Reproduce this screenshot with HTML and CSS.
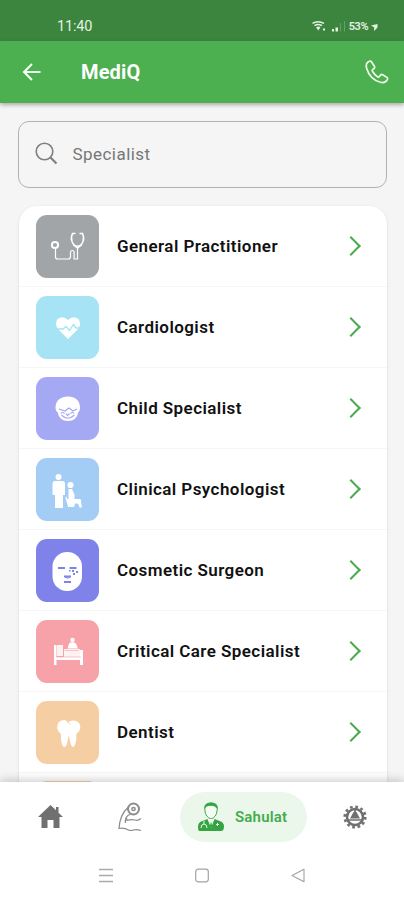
FILE: index.html
```
<!DOCTYPE html>
<html lang="en">
<head>
<meta charset="utf-8">
<meta name="viewport" content="width=device-width, initial-scale=1">
<title>MediQ</title>
<link rel="stylesheet" href="styles.css">
</head>
<body>
<div class="app">
  <div class="status">
    <span class="time">11:40</span>
    <svg class="wifi" width="14" height="12" viewBox="0 0 14 12"><path d="M.5 3.400Q6 0 12 3.400M2.500 5.600q3.500-2.400 7.500 0" fill="none" stroke="currentColor" stroke-width="1.500"/><path d="M4 7.200Q6.500 5.700 8.500 7.200L6.300 10.500ZM11 8.500h2v2h-2z" fill="currentColor"/></svg>
    <svg class="signal" width="16" height="13" viewBox="0 0 16 13"><path d="M1 9h2v2.500H1zM4.500 7.500H7v4H4.500z" fill="currentColor"/><path d="M9 3h1v8.500H9zM13 1h1v10.500h-1z" fill="currentColor" opacity=".25"/></svg>
    <span class="percent">53%</span>
    <svg class="bolt" width="7" height="9" viewBox="0 0 7 9"><path d="M0 3.500 6.500 2v3.500L3 9 3.200 5.500Z" fill="currentColor"/></svg>
  </div>
  <header class="bar">
    <svg class="back" width="20" height="20" viewBox="0 0 20 20"><path d="M18.500 10H2M10 2 2 10l8 8" fill="none" stroke="currentColor" stroke-width="2.100"/></svg>
    <h1>MediQ</h1>
    <svg class="phone" width="26" height="26" viewBox="0 0 26 26"><path d="M5.300 2.300C2.500 3.500 1.700 6 2.600 9.200 4.600 16 10 21.500 16.500 23.300c3.200.8 5.600-.1 7-2.900.4-.9.200-1.500-.6-2l-4.300-2.700c-.8-.5-1.500-.3-2.100.4l-1.300 1.600c-.4.500-.9.500-1.400.2-2.400-1.500-4.200-3.500-5.500-5.900-.3-.5-.2-1 .3-1.300l1.500-1.200c.7-.6.8-1.300.4-2L7.600 3c-.6-.9-1.300-1.200-2.300-.7Z" fill="none" stroke="currentColor" stroke-width="1.700" stroke-linejoin="round"/></svg>
  </header>
  <main class="content">
    <div class="search">
      <svg width="24" height="24" viewBox="0 0 24 24" fill="none" stroke="currentColor"><circle cx="9.500" cy="9.500" r="8.300" stroke-width="1.600"/><path d="m15.500 15.500 6 6" stroke-width="2.200"/></svg>
      <span>Specialist</span>
    </div>
    <ul class="list">
      <li><span class="tile gray"><svg width="63" height="63" viewBox="0 0 63 63" fill="none" stroke="#fff"><circle cx="19" cy="30" r="3.100" stroke-width="2"/><path d="M19.500 33.500v8.500q0 2 2 2H32q2.500 0 2.500-2.500v-4q0-2 1.800-2t1.800 2V44H41.500V32" stroke-width="1.200"/><path d="M39.500 18.500h-3q-2 4 -.5 8 2 4.800 5.500 4.800t5.500-4.800q1.500-4-.5-8h-3" stroke-width="1.500"/><path d="m37 29.500 4.500 3.500 4.500-3.500" stroke-width="1.500"/></svg></span><b>General Practitioner</b><i class="chev"></i></li>
      <li><span class="tile cyan"><svg width="63" height="63" viewBox="0 0 63 63"><path d="M32 43 21.500 32.500q-3-5 0-9.500 5.500-4 10.500 1 5-5 10.500-1 3 4.500 0 9.500Z" fill="#fff"/><path d="M20 33h7l3-2.500 3.500 4 4-6 2.500 3.500h4" fill="none" stroke="#a6e3f4" stroke-width="1.300"/></svg></span><b>Cardiologist</b><i class="chev"></i></li>
      <li><span class="tile lilac"><svg width="63" height="63" viewBox="0 0 63 63"><path d="M19.500 31C19.500 23.500 24.500 19.500 32 19.500S44 23.500 44 31q0 3-1.700 4-1.500 9-10.300 9t-10.500-9q-2-1-2-4Z" fill="#fff"/><path d="m23 32 6 2 4-3 4 3 4-2M25 36.500q1.500-2 3.500 0m6 0q2-2 3.500 0M25.500 38q6 6.500 13 0M30 36.500l1.500 2 2-2" fill="none" stroke="#a5a8f2" stroke-width="1.200"/></svg></span><b>Child Specialist</b><i class="chev"></i></li>
      <li><span class="tile blue"><svg width="63" height="63" viewBox="0 0 63 63" fill="#fff"><circle cx="22.500" cy="19" r="3"/><path d="M19 23h7.500q2.500 0 2.500 3v11h-2v13h-8V37h-2.500V26q0-3 2.500-3Z"/><circle cx="34.500" cy="27" r="3.100"/><path d="M32.500 31h3.500l2.500 5.500v4.500h6L46 49.500h-2.500L42 45.500h-3l-1 3.500h-4.500l-3-8h2Z"/><path d="m30 39 2.800 10M40 43h5" stroke="#fff" stroke-width="1.300"/></svg></span><b>Clinical Psychologist</b><i class="chev"></i></li>
      <li><span class="tile indigo"><svg width="63" height="63" viewBox="0 0 63 63"><rect x="16.500" y="13" width="29.500" height="39" rx="14.500" fill="#fff"/><path d="M22 29h7m4.500 0h7M28 37.500h7M28 43h7" stroke="#7f82e9" stroke-width="1.800"/><path d="M29 38q2.500 2.500 5 0" fill="none" stroke="#7f82e9"/><path d="M36 31h2v2h-2zM40 32h2v2h-2zM37 34h2v2h-2zM33 31h1.500v1.500H33z" fill="#7f82e9"/></svg></span><b>Cosmetic Surgeon</b><i class="chev"></i></li>
      <li><span class="tile pink"><svg width="63" height="63" viewBox="0 0 63 63" fill="#fff"><circle cx="36.500" cy="20" r="2.200"/><path d="m31.500 28.500 1.500-5q3.500-2.500 7 0l2 5ZM18 25h2.500v12H44v-7h3v15h-3v-5H20.500v5H18Z"/><path d="M21 25h6v11h-6zM28 29h16v8H28z" opacity=".85"/><path d="M20 37h25M28.500 30.500H43" stroke="#f7a1a9" stroke-width=".6"/></svg></span><b>Critical Care Specialist</b><i class="chev"></i></li>
      <li><span class="tile peach"><svg width="63" height="63" viewBox="0 0 63 63"><path d="M32 21.500q2-2 5-2 7 0 7.300 6.500 0 4-4 7 .5 7.500-2 12-2 2.500-3.500-1.500l-2-9-2.200 9.500q-1.600 3.500-3.900 1-2.200-4.500-1.700-12-3.800-3-3.800-7 .3-6.800 7.300-7 2 .3 3.500 2Z" fill="#fff"/><path d="m30.500 20.500 4 3" stroke="#f6cea3" stroke-width=".8"/></svg></span><b>Dentist</b><i class="chev"></i></li>
      <li class="peek"><span class="tile peach"></span></li>
    </ul>
  </main>
  <nav class="tabs">
    <div class="tab"><svg width="25" height="24" viewBox="0 0 25 24"><path d="M12.500 0 18 5.300V2h2.500v5.700L25 12h-3.500v11h-6v-8h-6v8h-6V12H0Z" fill="#707070"/></svg></div>
    <div class="tab muscle"><svg width="28" height="32" viewBox="0 0 28 32" fill="none" stroke="#8c8c8c"><circle cx="17.500" cy="8" r="5.500" stroke-width="2"/><circle cx="17.500" cy="8" r="1.600" stroke-width="1.500"/><path d="M12.500 6Q4 13 3 27.500q5-1 9.500 1.500 2 1 5 0t7.500.5M9.500 22q-1-5 3-8l2-.5M10.500 17l.5 2.500q4-1.500 8-.5 3 1 6-1.500" stroke-width="1.200"/></svg></div>
    <div class="tab active"><svg width="28" height="31" viewBox="0 0 28 31"><path d="M8 10Q6 2 14 2t6 8q-.5 6-6 8-5.500-2-6-8Z" fill="#f5fcf5" stroke="#3fab49" stroke-width="1"/><path d="M7.500 8Q7 1.500 14 1.500T20.500 8Q17 4 14 5 10 4 7.500 8Z" fill="#36a442"/><path d="M1.500 29.500q-2-8 4-9.500l5-2 3.500 4 3.500-4 5 2q6 1.500 4 8.500-.5 1.500-3 1.500H4q-2 0-2.500-.5Z" fill="#36a442"/><path d="m10.500 18 3.500 9 3.500-9" fill="#eef9ee"/><path d="M14 20.500 12.800 25l1.200 2 1.200-2Z" fill="#36a442"/><path d="M7 20v3q-3 0-3 4m3-4q3 0 3 4M20.500 22v3m-1.500-1.500h3" fill="none" stroke="#e9f8e9" stroke-width="1"/></svg><span>Sahulat</span></div>
    <div class="tab gear"><svg width="24" height="24" viewBox="0 0 24 24" fill="none" stroke="#707070"><circle cx="12" cy="12" r="10.300" stroke-width="2.600" stroke-dasharray="2.700 2.693"/><circle cx="12" cy="12" r="8" stroke-width="2.600"/><path d="M12 4v4M5 15h14" stroke-width="1.700"/><path d="m10.500 7-3.500 6.500h10l-3.500-6.500Z" fill="#707070" stroke="none"/></svg></div>
  </nav>
  <footer class="system">
    <svg width="14" height="15" viewBox="0 0 14 15"><path d="M0 1.500h14M0 7.500h14M0 13.500h14" stroke="#aaa" stroke-width="1.300"/></svg>
    <svg width="14" height="15" viewBox="0 0 14 15"><rect x=".7" y="1.200" width="12.600" height="12.600" rx="2.500" fill="none" stroke="#a3a3a3" stroke-width="1.200"/></svg>
    <svg width="14" height="15" viewBox="0 0 14 15"><path d="M1 7.500 13 1.200v12.600Z" fill="none" stroke="#a3a3a3" stroke-width="1.100" stroke-linejoin="round"/></svg>
  </footer>
</div>
</body>
</html>
```
FILE: styles.css
```
* { box-sizing: border-box; }
body { margin: 0; font-family: Roboto, "Liberation Sans", sans-serif; background: #f5f5f5; }
svg { display: block; flex: none; }
.app { height: 900px; display: flex; flex-direction: column; overflow: hidden; }

.status { height: 41px; flex: none; display: flex; align-items: center; padding: 11px 26px 0 57px; background: #3b853e; color: #e3f2e1; }
.time { font-size: 14.5px; letter-spacing: -.2px; margin-right: auto; }
.wifi { margin-right: 5px; }
.signal { margin-right: 2px; }
.percent { font-size: 11px; font-weight: 600; letter-spacing: -.5px; margin-right: 3px; }

.bar { height: 62px; flex: none; display: flex; align-items: center; padding: 0 14px 0 22px; background: #4caf50; color: #fff; box-shadow: 0 2px 4px rgba(0, 0, 0, .3); z-index: 1; }
.bar h1 { margin: 0 auto 0 39px; font-size: 20px; line-height: 24px; font-weight: 700; letter-spacing: .15px; }
.back { color: #f0fff0; }
.phone { color: #effbe9; }

.content { flex: 1; min-height: 0; overflow: hidden; padding: 18px 17px 0 18px; }
.search { height: 67px; display: flex; align-items: center; gap: 14px; padding: 0 15.5px 2px; border: 1px solid #b2b2b2; border-radius: 11px; color: #777; font-size: 17px; letter-spacing: .45px; }
.search svg { color: #808080; }

.list { list-style: none; margin: 18px 0 0 1px; padding: 0; background: #fff; border-radius: 18px 18px 0 0; box-shadow: 0 1px 3px rgba(0, 0, 0, .13); }
.list li { height: 81px; display: flex; align-items: center; padding: 0 25px 0 17.4px; border-bottom: 1px solid #f5f5f5; }
.list b { flex: 1; font-size: 17px; font-weight: 600; letter-spacing: .43px; color: #111; }
.list .peek { padding-bottom: 2px; }
.tile { width: 63px; height: 63px; flex: none; border-radius: 11px; margin-right: 17.6px; }
.gray { background: #a1a5a8; }
.cyan { background: #a6e3f4; }
.lilac { background: #a5a8f2; }
.blue { background: #a3cdf4; }
.indigo { background: #7f82e9; }
.pink { background: #f7a1a9; }
.peach { background: #f6cea3; }
.chev { width: 14px; height: 14px; margin-right: 4px; border: solid #4baa50; border-width: 2px 2px 0 0; transform: rotate(45deg); }

.tabs { height: 69px; flex: none; display: grid; grid-template-columns: 101px 79px 127px 97px; align-items: center; justify-items: center; background: #fff; box-shadow: 0 -2px 9px rgba(0, 0, 0, .2); z-index: 1; }
.tab.muscle { margin-right: 21px; }
.tab.gear { margin-right: 2px; }
.tab.active { width: 127px; height: 50px; border-radius: 25px; background: #ebf7eb; display: flex; align-items: center; padding-left: 17px; gap: 10px; color: #43ac4c; font-size: 15px; font-weight: 600; letter-spacing: .2px; }
.system { height: 49px; flex: none; display: flex; justify-content: center; gap: 82px; padding-top: 17px; background: #fff; z-index: 2; }
```
